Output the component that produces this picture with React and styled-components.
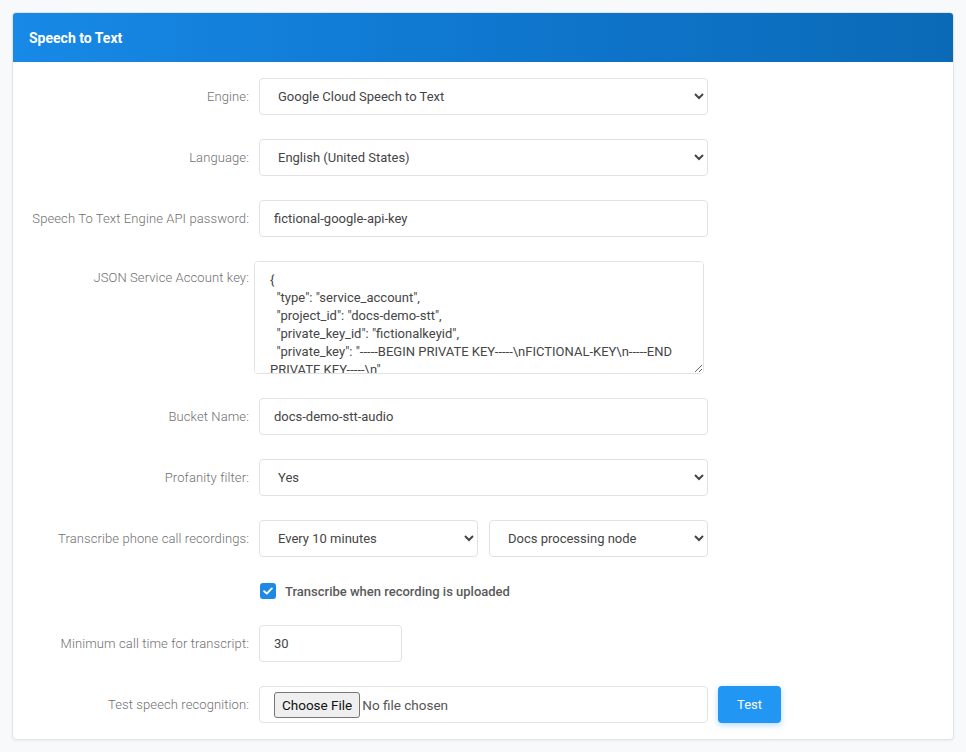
import React from "react";
import styled, { createGlobalStyle } from "styled-components";

const Global = createGlobalStyle`
  html, body { margin: 0; padding: 0; }
  body {
    background: #f8f9fa;
    font-family: Roboto, "Noto Sans", Arial, sans-serif;
    -webkit-font-smoothing: antialiased;
  }
`;

const Page = styled.div`
  padding: 12px;
`;

const Card = styled.section`
  background: #fff;
  border: 1px solid #e1e3e6;
  border-radius: 4px;
  box-shadow: 0 1px 3px rgba(0, 0, 0, 0.05);
  overflow: hidden;
`;

const CardHeader = styled.header`
  height: 49px;
  display: flex;
  align-items: center;
  padding: 0 16px;
  background: linear-gradient(90deg, #1789e6 0%, #0f77cf 50%, #0b6ab7 100%);
  color: #fff;
  font-size: 14px;
  font-weight: 700;
`;

const Form = styled.div`
  display: grid;
  grid-template-columns: 236px 449px auto;
  column-gap: 10px;
  row-gap: 24px;
  padding: 16px 0 16px 0;
  align-items: center;
`;

const Label = styled.label`
  text-align: right;
  font-size: 13px;
  font-weight: 300;
  color: #707070;
  letter-spacing: 0.1px;
  align-self: ${(p) => (p.$top ? "start" : "center")};
  padding-top: ${(p) => (p.$top ? "9px" : "0")};
`;

const fieldBase = `
  box-sizing: border-box;
  width: 100%;
  border: 1px solid #e2e2e2;
  border-radius: 4px;
  background: #fff;
  font-family: Roboto, "Noto Sans", Arial, sans-serif;
  font-size: 13px;
  color: #454545;
  outline: none;
`;

const Select = styled.select`
  ${fieldBase}
  height: 37px;
  padding: 0 8px 0 14px;
`;

const TextInput = styled.input`
  ${fieldBase}
  height: 37px;
  padding: 0 14px;
  width: ${(p) => p.$w || "100%"};
`;

const TextArea = styled.textarea`
  ${fieldBase}
  width: 450px;
  height: 113px;
  margin-left: -5px;
  padding: 9px 15px;
  line-height: 18px;
  resize: vertical;
`;

const Pair = styled.div`
  display: grid;
  grid-template-columns: 219px 219px;
  column-gap: 11px;
`;

const CheckRow = styled.label`
  grid-column: 2 / span 2;
  display: flex;
  align-items: center;
  gap: 9px;
  font-size: 13px;
  font-weight: 500;
  color: #5a5a5a;
  height: 20px;
`;

const CheckBox = styled.span`
  width: 16px;
  height: 16px;
  margin-left: 1px;
  border-radius: 3px;
  background: #1e88e5;
  display: inline-flex;
  align-items: center;
  justify-content: center;
`;

const FileBox = styled.div`
  ${fieldBase}
  height: 37px;
  display: flex;
  align-items: center;
  padding: 0 14px;
  color: #555;
`;

const FileInput = styled.input`
  font-family: Roboto, "Noto Sans", Arial, sans-serif;
  font-size: 13.5px;
  color: #555;
  &::file-selector-button {
    font-family: Roboto, "Noto Sans", Arial, sans-serif;
    font-size: 13.5px;
    color: #111;
    background: #efefef;
    border: 1px solid #767676;
    border-radius: 3px;
    padding: 4px 7px;
    margin-right: 2px;
  }
`;

const Button = styled.button`
  justify-self: start;
  height: 37px;
  width: 63px;
  border: none;
  border-radius: 4px;
  background: #2196f3;
  color: #fff;
  font-family: Roboto, "Noto Sans", Arial, sans-serif;
  font-size: 13px;
  box-shadow: 0 2px 6px rgba(33, 150, 243, 0.35);
  cursor: pointer;
`;

const Spacer = styled.span``;

const serviceKey = `{
  "type": "service_account",
  "project_id": "docs-demo-stt",
  "private_key_id": "fictionalkeyid",
  "private_key": "-----BEGIN PRIVATE KEY-----\\nFICTIONAL-KEY\\n-----END PRIVATE KEY-----\\n",
  "client_email": "stt@docs-demo-stt.iam.gserviceaccount.com",
  "client_id": "000000000000000000000"
}`;

export default function App() {
  return (
    <>
      <Global />
      <Page>
        <Card>
          <CardHeader>Speech to Text</CardHeader>
          <Form>
            <Label>Engine:</Label>
            <Select defaultValue="google">
              <option value="google">Google Cloud Speech to Text</option>
            </Select>
            <Spacer />

            <Label>Language:</Label>
            <Select defaultValue="en-US">
              <option value="en-US">English (United States)</option>
            </Select>
            <Spacer />

            <Label>Speech To Text Engine API password:</Label>
            <TextInput type="text" defaultValue="fictional-google-api-key" />
            <Spacer />

            <Label $top>JSON Service Account key:</Label>
            <TextArea defaultValue={serviceKey} spellCheck={false} />
            <Spacer />

            <Label>Bucket Name:</Label>
            <TextInput type="text" defaultValue="docs-demo-stt-audio" />
            <Spacer />

            <Label>Profanity filter:</Label>
            <Select defaultValue="yes">
              <option value="yes">Yes</option>
              <option value="no">No</option>
            </Select>
            <Spacer />

            <Label>Transcribe phone call recordings:</Label>
            <Pair>
              <Select defaultValue="10">
                <option value="10">Every 10 minutes</option>
              </Select>
              <Select defaultValue="node">
                <option value="node">Docs processing node</option>
              </Select>
            </Pair>
            <Spacer />

            <Spacer />
            <CheckRow>
              <CheckBox>
                <svg width="10" height="8" viewBox="0 0 10 8">
                  <path
                    d="M1.2 4.2 L3.8 6.6 L8.8 1.4"
                    fill="none"
                    stroke="#fff"
                    strokeWidth="1.9"
                    strokeLinecap="round"
                    strokeLinejoin="round"
                  />
                </svg>
              </CheckBox>
              Transcribe when recording is uploaded
            </CheckRow>

            <Label>Minimum call time for transcript:</Label>
            <TextInput type="text" defaultValue="30" $w="143px" />
            <Spacer />

            <Label>Test speech recognition:</Label>
            <FileBox>
              <FileInput type="file" />
            </FileBox>
            <Button type="button">Test</Button>
          </Form>
        </Card>
      </Page>
    </>
  );
}
